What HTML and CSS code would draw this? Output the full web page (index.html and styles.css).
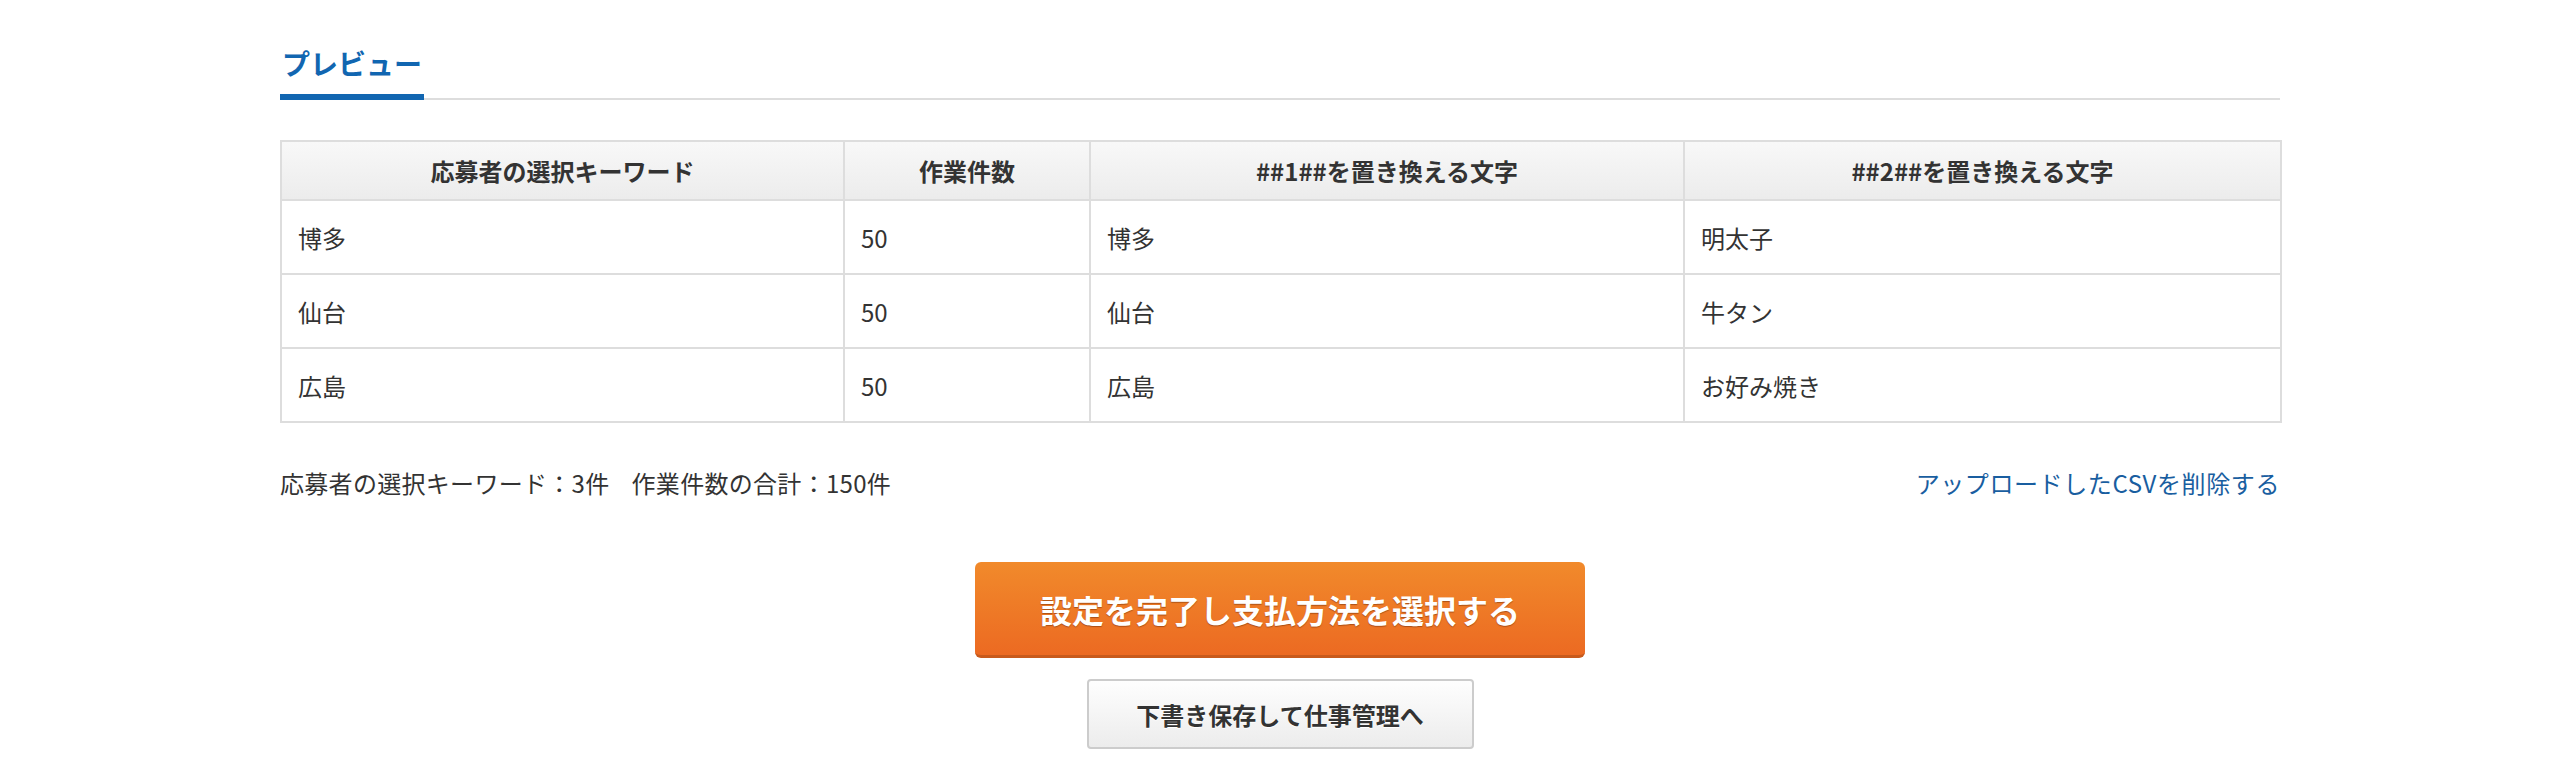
FILE: index.html
```html
<!DOCTYPE html>
<html lang="ja">
<head>
<meta charset="utf-8">
<title>プレビュー</title>
<link rel="stylesheet" href="styles.css">
</head>
<body>
<div class="page">
  <div class="tabs">
    <span class="tab">プレビュー</span>
  </div>

  <table class="preview">
    <colgroup>
      <col class="c1"><col class="c2"><col class="c3"><col class="c4">
    </colgroup>
    <thead>
      <tr>
        <th>応募者の選択キーワード</th>
        <th>作業件数</th>
        <th>##1##を置き換える文字</th>
        <th>##2##を置き換える文字</th>
      </tr>
    </thead>
    <tbody>
      <tr><td>博多</td><td>50</td><td>博多</td><td>明太子</td></tr>
      <tr><td>仙台</td><td>50</td><td>仙台</td><td>牛タン</td></tr>
      <tr><td>広島</td><td>50</td><td>広島</td><td>お好み焼き</td></tr>
    </tbody>
  </table>

  <div class="summary">
    <p class="totals"><span>応募者の選択キーワード：3件</span><span class="sep">作業件数の合計：150件</span></p>
    <a class="delete" href="#">アップロードしたCSVを削除する</a>
  </div>

  <div class="actions">
    <button class="btn-primary" type="button">設定を完了し支払方法を選択する</button>
    <button class="btn-secondary" type="button">下書き保存して仕事管理へ</button>
  </div>
</div>
</body>
</html>
```

FILE: styles.css
```css
html, body {
  margin: 0;
  padding: 0;
  background: #fff;
}

body {
  font-family: "Noto Sans CJK JP", "Noto Sans", sans-serif;
  color: #333;
}

.page {
  width: 2000px;
  margin: 0 auto;
  padding-top: 42px;
}

.tabs {
  display: flex;
  border-bottom: 2px solid #dddddd;
}

.tab {
  font-size: 28px;
  line-height: 42px;
  font-weight: bold;
  color: #1166b1;
  padding: 0 2px 10px;
  border-bottom: 6px solid #1166b1;
  margin-bottom: -2px;
}

.preview {
  margin-top: 40px;
  width: 2000px;
  border-collapse: collapse;
  table-layout: fixed;
  border: 2px solid #dddddd;
}

.c1 { width: 563px; }
.c2 { width: 246px; }
.c3 { width: 594px; }
.c4 { width: 597px; }

.preview th,
.preview td {
  border: 2px solid #dddddd;
  font-size: 24px;
}

.preview th {
  height: 57px;
  padding: 0;
  font-weight: bold;
  color: #333;
  text-align: center;
  background: linear-gradient(#f8f8f8, #ececec);
}

.preview td {
  height: 72px;
  padding: 0 16px;
  color: #333;
  text-align: left;
}

.summary {
  display: flex;
  justify-content: space-between;
  align-items: baseline;
  margin-top: 42px;
  font-size: 24px;
  line-height: 36px;
}

.totals {
  margin: 0;
  color: #333;
  letter-spacing: 0.3px;
}

.sep {
  margin-left: 22px;
}

.delete {
  color: #195ea0;
  text-decoration: none;
  letter-spacing: 0.6px;
}

.actions {
  display: flex;
  flex-direction: column;
  align-items: center;
  gap: 21px;
  margin-top: 61px;
}

.btn-primary {
  width: 610px;
  height: 96px;
  border: 0;
  border-bottom: 3px solid #c85a1c;
  border-radius: 6px;
  background: linear-gradient(#f18a2b, #ec6a22);
  color: #fff;
  font-family: inherit;
  font-size: 32px;
  font-weight: bold;
  text-shadow: 0 1px 1px rgba(90, 30, 0, 0.45);
  cursor: pointer;
}

.btn-secondary {
  width: 387px;
  height: 70px;
  border: 2px solid #cccccc;
  border-radius: 4px;
  background: linear-gradient(#fefefe, #ececec);
  color: #333;
  font-family: inherit;
  font-size: 24px;
  font-weight: bold;
  text-shadow: 0 1px 0 #fff;
  cursor: pointer;
}
```
